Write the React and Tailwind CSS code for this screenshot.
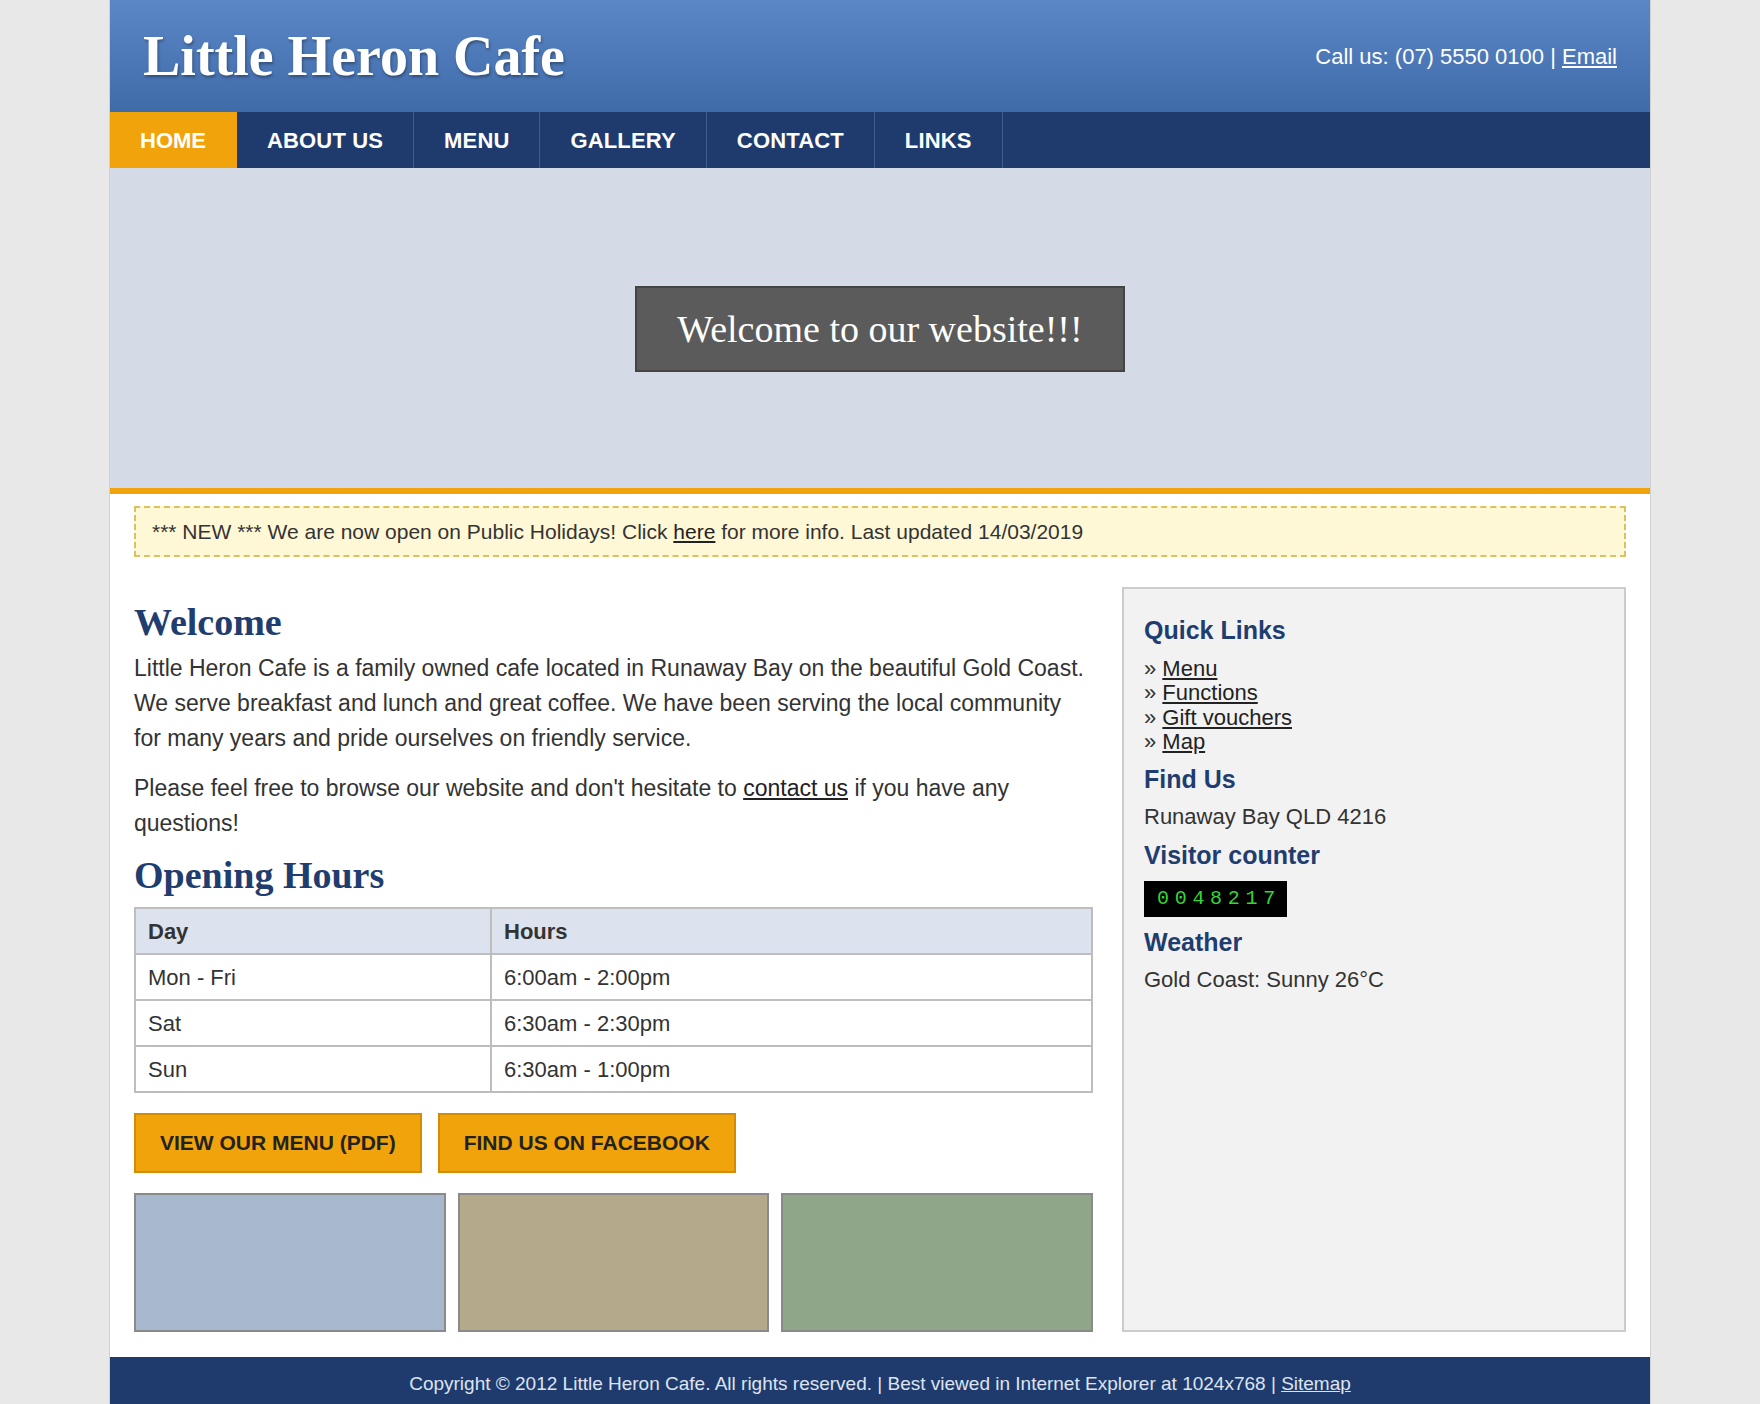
import React from "react";

const navItems = ["HOME", "ABOUT US", "MENU", "GALLERY", "CONTACT", "LINKS"];

const hours = [
  ["Mon - Fri", "6:00am - 2:00pm"],
  ["Sat", "6:30am - 2:30pm"],
  ["Sun", "6:30am - 1:00pm"],
];

const quickLinks = ["Menu", "Functions", "Gift vouchers", "Map"];

const sans = "font-['Liberation_Sans',Arial,sans-serif]";
const serif = "font-['Liberation_Serif',Georgia,serif]";

const Header = () => (
  <div className="h-[112px] px-[33px] flex items-center justify-between bg-gradient-to-b from-[#5b87c7] to-[#3f6ba9]">
    <h1
      className={`${serif} text-white font-bold text-[56px] leading-none [text-shadow:1px_2px_3px_rgba(0,0,0,0.35)]`}
    >
      Little Heron Cafe
    </h1>
    <div className="text-white text-[22px]">
      Call us: (07) 5550 0100 | <a className="underline">Email</a>
    </div>
  </div>
);

const Nav = () => (
  <div className="h-[56px] bg-[#1f3b6e] flex">
    {navItems.map((item, i) => (
      <a
        key={item}
        className={
          i === 0
            ? "h-full flex items-center px-[30px] text-[22px] font-bold text-white bg-[#f0a30a] border-r border-[#f0a30a]"
            : "h-full flex items-center px-[30px] text-[22px] tracking-[0.15px] font-bold text-white border-r border-[#3e5d91]"
        }
      >
        {item}
      </a>
    ))}
  </div>
);

const Hero = () => (
  <div className="h-[326px] bg-[#d4dbe6] border-b-[6px] border-[#f0a30a] flex items-center justify-center">
    <div className="border-2 border-[#444] bg-[#5b5b5b] px-[40px] py-[18px] mt-[2px]">
      <span className={`${serif} text-white text-[38px] leading-[46px] block`}>Welcome to our website!!!</span>
    </div>
  </div>
);

const SideHeading = ({ children, className = "" }) => (
  <h3 className={`text-[25px] leading-[30px] font-bold text-[#1f3d6e] ${className}`}>{children}</h3>
);

const Sidebar = () => (
  <div className="w-[504px] shrink-0 bg-[#f2f2f2] border-2 border-[#cccccc] px-[20px] pt-[26px] text-[#333]">
    <SideHeading>Quick Links</SideHeading>
    <ul className="mt-[12px] text-[22px] leading-[24.4px]">
      {quickLinks.map((l) => (
        <li key={l}>
          » <a className="underline text-[#222]">{l}</a>
        </li>
      ))}
    </ul>
    <SideHeading className="mt-[9px]">Find Us</SideHeading>
    <p className="mt-[8px] text-[22px] leading-[30px]">Runaway Bay QLD 4216</p>
    <SideHeading className="mt-[8px]">Visitor counter</SideHeading>
    <div className="mt-[11px] w-[143px] h-[36px] bg-black pl-[13px] font-['Liberation_Mono',monospace] text-[20px] leading-[36px] tracking-[5.7px] text-[#33d633]">
      0048217
    </div>
    <SideHeading className="mt-[10px]">Weather</SideHeading>
    <p className="mt-[8px] text-[22px] leading-[30px]">Gold Coast: Sunny 26°C</p>
  </div>
);

const Main = () => (
  <div className="w-[959px] shrink-0 text-[#333]">
    <h2 className={`${serif} mt-[12px] text-[38px] leading-[46px] font-bold text-[#1f3d6e]`}>Welcome</h2>
    <p className="mt-[6px] text-[23px] leading-[35px]">
      Little Heron Cafe is a family owned cafe located in Runaway Bay on the beautiful Gold Coast. We serve
      breakfast and lunch and great coffee. We have been serving the local community for many years and pride
      ourselves on friendly service.
    </p>
    <p className="mt-[15px] text-[23px] leading-[35px]">
      Please feel free to browse our website and don't hesitate to <a className="underline text-[#222]">contact us</a>{" "}
      if you have any questions!
    </p>
    <h2 className={`${serif} mt-[11px] text-[38px] leading-[46px] font-bold text-[#1f3d6e]`}>Opening Hours</h2>
    <table className="mt-[9px] w-full border-collapse border-2 border-[#bdbdbd] text-[22px]">
      <thead>
        <tr className="bg-[#dce3ee]">
          <th className="w-[356px] h-[46px] border-2 border-[#bdbdbd] px-[12px] text-left font-bold">Day</th>
          <th className="h-[46px] border-2 border-[#bdbdbd] px-[12px] text-left font-bold">Hours</th>
        </tr>
      </thead>
      <tbody>
        {hours.map(([d, h]) => (
          <tr key={d} className="bg-white">
            <td className="h-[46px] border-2 border-[#bdbdbd] px-[12px]">{d}</td>
            <td className="h-[46px] border-2 border-[#bdbdbd] px-[12px]">{h}</td>
          </tr>
        ))}
      </tbody>
    </table>
    <div className="mt-[20px] flex gap-[16px]">
      <a className="h-[60px] flex items-center px-[24px] bg-[#f0a30a] border-2 border-[#d48c05] text-[21px] font-bold text-[#222]">
        VIEW OUR MENU (PDF)
      </a>
      <a className="h-[60px] flex items-center px-[24px] bg-[#f0a30a] border-2 border-[#d48c05] text-[21px] font-bold text-[#222]">
        FIND US ON FACEBOOK
      </a>
    </div>
    <div className="mt-[20px] grid grid-cols-3 gap-[12px]">
      <div className="h-[139px] bg-[#a7b8cf] border-2 border-[#8a8a8a]"></div>
      <div className="h-[139px] bg-[#b5a98b] border-2 border-[#8a8a8a]"></div>
      <div className="h-[139px] bg-[#8fa688] border-2 border-[#8a8a8a]"></div>
    </div>
  </div>
);

const Footer = () => (
  <div className="mt-[25px] bg-[#1f3b6e] py-[15px] text-center text-[19px] leading-[24px] text-[#dde4f0]">
    Copyright © 2012 Little Heron Cafe. All rights reserved. | Best viewed in Internet Explorer at 1024x768 |{" "}
    <a className="underline">Sitemap</a>
  </div>
);

export default function App() {
  return (
    <div className={`min-h-screen bg-[#e8e8e8] ${sans}`}>
      <div className="w-[1542px] mx-auto bg-white border-x border-[#d0d0d0]">
        <Header />
        <Nav />
        <Hero />
        <div className="mx-[24px] mt-[12px] border-2 border-dashed border-[#d9c35c] bg-[#fff8d6] px-[16px] py-[12px] text-[21px] leading-[23px] text-[#333]">
          *** NEW *** We are now open on Public Holidays! Click <a className="underline text-[#222]">here</a> for
          more info. Last updated 14/03/2019
        </div>
        <div className="mt-[30px] px-[24px] flex gap-[29px]">
          <Main />
          <Sidebar />
        </div>
        <Footer />
      </div>
    </div>
  );
}
